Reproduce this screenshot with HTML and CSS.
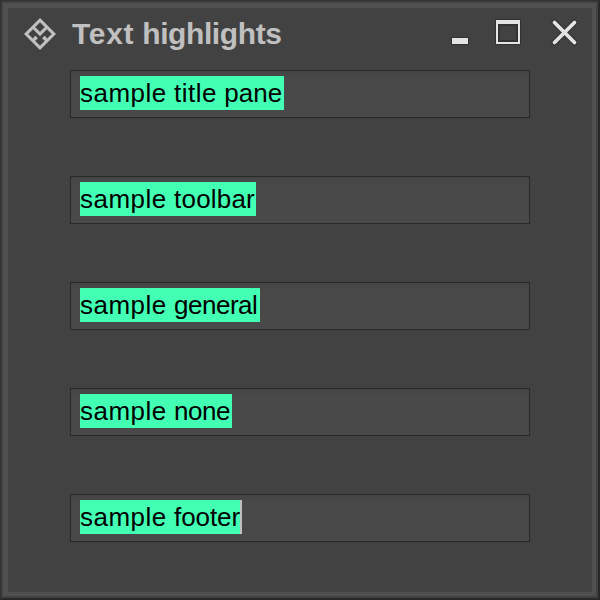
FILE: index.html
```html
<!DOCTYPE html>
<html lang="en">
<head>
<meta charset="utf-8">
<title>Text highlights</title>
<link rel="stylesheet" href="styles.css">
</head>
<body>
<div class="window">
  <div class="frame">
    <header class="titlebar">
      <svg class="logo" width="32" height="32" viewBox="0 0 32 32">
        <path d="M16 2.2 29.8 16 16 29.8 2.2 16ZM9 9l7 7 7-7M9 23l3.8-3.8M10.2 18.8l2.6 2.6M23 23l-3.8-3.8M21.8 18.8l-2.6 2.6"/>
      </svg>
      <h1 class="title"><span class="wide">Text</span> highlights</h1>
      <svg class="controls" width="136" height="36" viewBox="448 15 136 36">
        <g class="control-shadow">
          <path d="M451 37h18v8h-18z"/>
          <path d="M495 19h26v26h-26z"/>
          <path class="cross" d="M554.5 22.5l20 20M574.5 22.5l-20 20"/>
        </g>
        <g class="control-face">
          <path d="M452 38h16v6h-16z"/>
          <path d="M496 20h24v24h-24zM498 24v18h20V24z" fill-rule="evenodd"/>
          <path class="cross" d="M554.5 22.5l20 20M574.5 22.5l-20 20"/>
        </g>
        <path class="pane" d="M500 26h16v14h-16z"/>
      </svg>
    </header>
    <main class="fields">
      <div class="field"><span class="highlight title-pane"><span class="lead">sample</span> <span class="word-title">title</span> <span class="word-pane">pane</span></span></div>
      <div class="field"><span class="highlight toolbar"><span class="lead">sample</span> <span class="word-toolbar">toolbar</span></span></div>
      <div class="field"><span class="highlight general"><span class="lead">sample</span> <span class="word-general">general</span></span></div>
      <div class="field"><span class="highlight none"><span class="lead">sample</span> <span class="word-none">none</span></span></div>
      <div class="field"><span class="highlight footer"><span class="lead">sample</span> <span class="word-footer">footer</span></span><span class="caret"></span></div>
    </main>
  </div>
</div>
</body>
</html>
```
FILE: styles.css
```css
* { box-sizing: border-box; }
body {
  margin: 0;
  font-family: "Liberation Sans", Arial, sans-serif;
}
.window {
  width: 600px;
  height: 600px;
  border: solid;
  border-width: 1px 2px 2px 1px;
  border-color: #303030 #282828 #282828 #303030;
  background: #414141;
  padding: 2px;
}
.frame {
  height: 100%;
  border: solid #505050;
  border-width: 5px 4px 4px 5px;
  background: #424242;
}
.titlebar {
  display: flex;
  height: 62px;
  padding: 7px 8px 0 16px;
}
.logo {
  margin-top: 3px;
  fill: none;
  stroke: #c0c0c0;
  stroke-width: 3.1;
}
.title {
  margin: 2px 0 0 16px;
  width: 376px;
  color: #c0c0c0;
  font-size: 30px;
  line-height: 34px;
  letter-spacing: -0.4px;
  white-space: nowrap;
}
.wide { letter-spacing: 0.7px; }
.controls { flex: none; }
.control-shadow { fill: #333; stroke: #333; }
.control-face { fill: #e4e4e4; stroke: #e4e4e4; }
.control-shadow path:not(.cross), .control-face path:not(.cross) { stroke: none; }
.cross { stroke-width: 3.8; stroke-linecap: round; }
.control-shadow .cross { stroke-width: 6; }
.pane { fill: #424242; }
.fields {
  display: flex;
  flex-direction: column;
  gap: 58px;
  padding: 0 62px;
}
.field {
  display: flex;
  height: 48px;
  padding: 5px 9px;
  border: 1px solid #282828;
  background: linear-gradient(#454545, #494949 20%);
}
.highlight {
  height: 34px;
  background: #42ffb4;
  color: #000;
  font-size: 26px;
  line-height: 34px;
  white-space: nowrap;
}
.lead { letter-spacing: 0.5px; }
.word-title { letter-spacing: 0.5px; }
.word-pane { letter-spacing: 0; }
.word-toolbar { letter-spacing: 0.2px; }
.word-general { letter-spacing: -0.5px; }
.word-none { letter-spacing: -0.5px; }
.word-footer { letter-spacing: -0.1px; }
.title-pane { width: 204px; }
.toolbar { width: 176px; }
.general { width: 180px; }
.none { width: 152px; }
.footer { width: 160px; }
.caret {
  width: 2px;
  height: 34px;
  background: #c0c0c0;
}
```
